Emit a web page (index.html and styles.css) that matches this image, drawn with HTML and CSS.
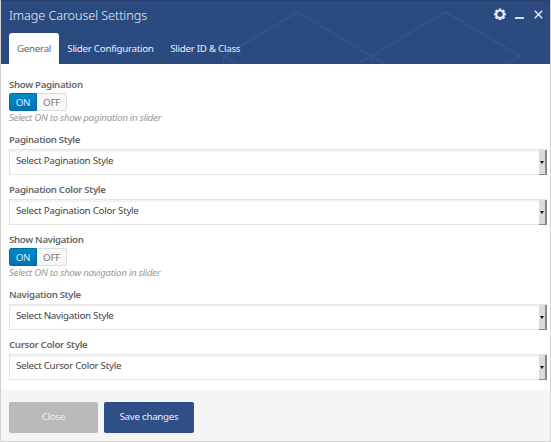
FILE: index.html
```html
<!DOCTYPE html>
<html lang="en">
<head>
<meta charset="utf-8">
<title>Image Carousel Settings</title>
<link rel="stylesheet" href="styles.css">
</head>
<body>
<div class="panel">
  <header class="header">
    <svg class="pattern" viewBox="0 0 551 64" aria-hidden="true"><path d="M223 56 298 11 373 56 448 11 524 56 510 64M223 56v8M223 56l13 8M373 56v8M373 56l-14 8M373 56l14 8"/></svg>
    <div class="titlebar">
      <h1 class="title">Image Carousel Settings</h1>
      <div class="controls">
        <svg class="gear" viewBox="0 0 12 12"><path fill-rule="evenodd" d="M4.8.5h2.4l.3 1.4.8.3 1.2-.8 1.7 1.7-.8 1.2.3.8 1.3.2v1.9l-1.3.3-.3.8.8 1.2-1.7 1.7-1.2-.8-.8.3-.3 1.2H4.8l-.3-1.2-.8-.3-1.2.8L.8 9.5l.8-1.2-.3-.8L0 7.2V5.3l1.3-.2.3-.8L.8 3.1l1.7-1.7 1.2.8.8-.3zM6 3.6a2.6 2.6 0 1 0 0 5.2 2.6 2.6 0 0 0 0-5.2z"/></svg>
        <span class="minimize"></span>
        <svg class="close" viewBox="0 0 9 9"><path d="M.8.8l7.4 7.4M8.2.8L.8 8.2"/></svg>
      </div>
    </div>
    <nav class="tabs">
      <a class="tab active">General</a>
      <a class="tab">Slider Configuration</a>
      <a class="tab">Slider ID &amp; Class</a>
    </nav>
  </header>
  <main class="body">
    <section class="field toggle-field">
      <div class="label">Show Pagination</div>
      <div class="toggle"><span class="on">ON</span><span class="off">OFF</span></div>
      <div class="hint">Select ON to show pagination in slider</div>
    </section>
    <section class="field">
      <div class="label">Pagination Style</div>
      <div class="select"><span>Select Pagination Style</span><i class="arrow"></i></div>
    </section>
    <section class="field">
      <div class="label">Pagination Color Style</div>
      <div class="select"><span>Select Pagination Color Style</span><i class="arrow"></i></div>
    </section>
    <section class="field toggle-field">
      <div class="label">Show Navigation</div>
      <div class="toggle"><span class="on">ON</span><span class="off">OFF</span></div>
      <div class="hint">Select ON to show navigation in slider</div>
    </section>
    <section class="field">
      <div class="label">Navigation Style</div>
      <div class="select"><span>Select Navigation Style</span><i class="arrow"></i></div>
    </section>
    <section class="field">
      <div class="label">Cursor Color Style</div>
      <div class="select"><span>Select Cursor Color Style</span><i class="arrow"></i></div>
    </section>
  </main>
  <footer class="footer">
    <span class="button cancel">Close</span>
    <span class="button save">Save changes</span>
  </footer>
</div>
</body>
</html>
```
FILE: styles.css
```css
* { box-sizing: border-box; }
body { margin: 0; font: 9.8px/16px "Noto Sans", sans-serif; letter-spacing: -.29px; color: #444; }
.panel { width: 551px; height: 442px; display: flex; flex-direction: column; background: #fff; border: 1px solid #d2d2d2; border-top: 0; overflow: hidden; }
.header { position: relative; height: 64px; flex: none; margin: 0 -1px; padding: 0 9px; background: #2b4b80; border-top: 1px solid #29416c; }
.pattern { position: absolute; left: 0; top: 0; width: 551px; height: 63px; fill: none; stroke: #32558c; stroke-width: 1.6; }
.titlebar { position: relative; display: flex; justify-content: space-between; height: 32px; }
.title { margin: 0; font-size: 12.7px; letter-spacing: -.1px; font-weight: 300; line-height: 28px; color: #e6edf6; }
.controls { display: flex; height: 26px; align-items: center; }
.gear { width: 12px; height: 12px; fill: #e4eaf3; }
.minimize { width: 9px; height: 2px; margin: 8px 10px 0 9px; background: #d2dbe9; }
.close { width: 9px; height: 9px; margin-right: -1px; fill: none; stroke: #dde4ef; stroke-width: 1.6; }
.tabs { position: relative; display: flex; height: 31px; }
.tab { padding: 0 8.3px; line-height: 31px; color: #e6edf6; }
.tab.active { width: 50px; padding: 0 8px; background: #fff; color: #666; border-radius: 3px 3px 0 0; }
.body { flex: none; height: 326px; padding: 12px 3px 0 8px; }
.field { height: 50px; }
.toggle-field { height: 55px; }
.label { height: 17px; line-height: 17px; font-size: 9.6px; letter-spacing: -.3px; font-weight: 600; color: #666; }
.toggle { display: flex; width: 58px; height: 18px; line-height: 17px; }
.on { width: 28px; text-align: center; color: #d9f0fb; background: linear-gradient(#0089cd, #0073ae); border: 1px solid #006da3; border-radius: 2px 0 0 2px; }
.off { width: 30px; text-align: center; color: #777; background: #f7f7f7; border: 1px solid #ddd; border-left: 0; border-radius: 0 2px 2px 0; }
.hint { line-height: 13px; letter-spacing: -.33px; font-style: italic; color: #999; }
.select { display: flex; justify-content: space-between; height: 26px; margin-top: 1px; padding-left: 6px; line-height: 22px; border: 1px solid #e4e4e4; border-right: 0; box-shadow: inset 0 2px 1px #f3f3f3; }
.arrow { width: 8px; height: 25px; display: flex; align-items: center; justify-content: center; background: #dcdcdc; border-right: 2px solid #888; border-bottom: 1px solid #888; }
.arrow::before { content: ""; border: 2px solid transparent; border-top: 3px solid #111; border-bottom: 0; }
.footer { flex: 1; display: flex; gap: 6px; padding: 12px 8px; background: #f5f5f5; }
.button { width: 89px; height: 31px; line-height: 30px; text-align: center; border-radius: 2px; color: #eee; }
.cancel { background: #bababa; }
.save { width: 90px; background: #2f5086; color: #e6edf7; }
```
